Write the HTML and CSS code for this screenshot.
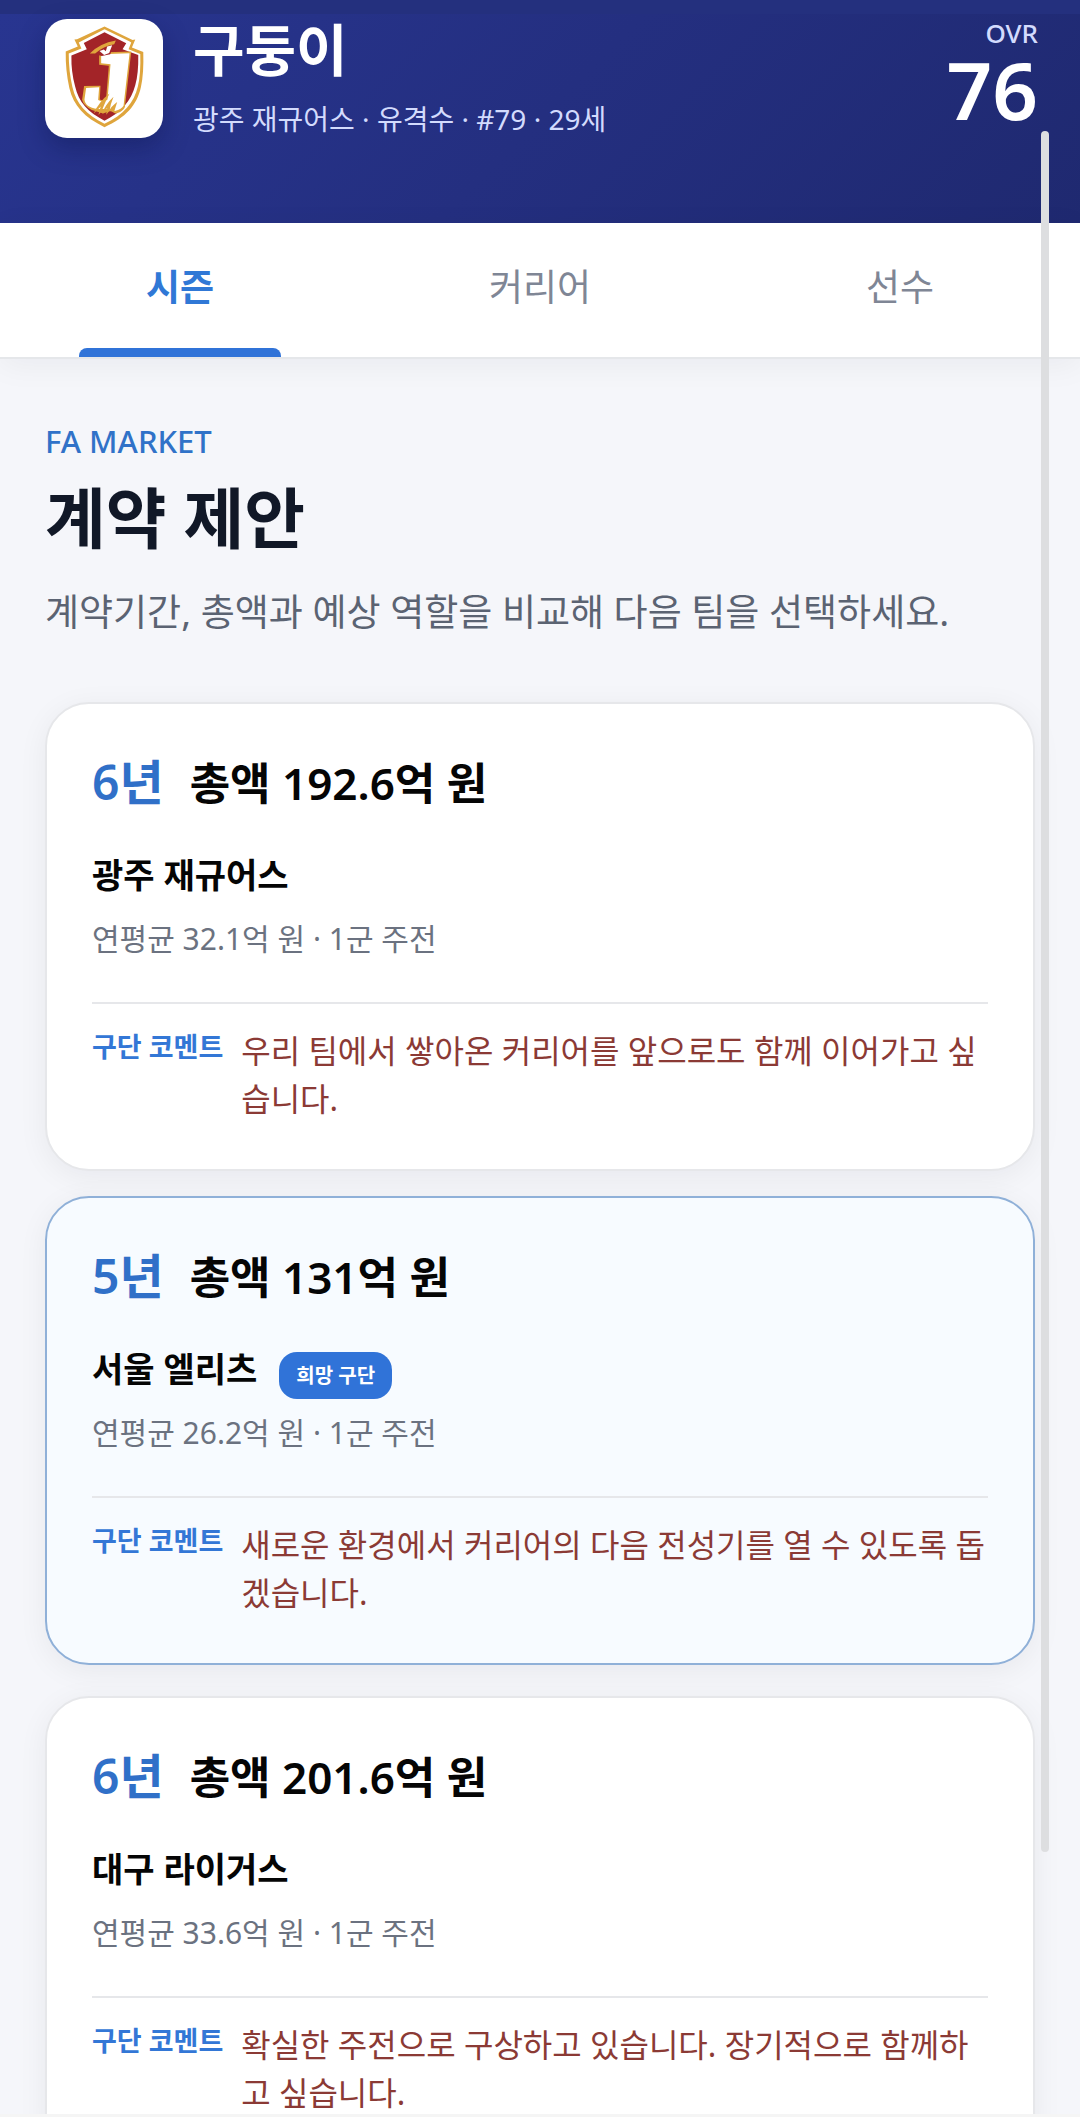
FILE: index.html
```html
<!DOCTYPE html>
<html lang="ko">
<head>
<meta charset="utf-8">
<meta name="viewport" content="width=device-width, initial-scale=1">
<title>계약 제안</title>
<link rel="stylesheet" href="styles.css">
</head>
<body>
<div class="app">
  <header class="player">
    <div class="player-logo">
      <svg viewBox="45 28 353 355" role="img" aria-label="광주 재규어스">
        <path fill="#dfa53c" d="M223 50 307 90 315 89 305 113 339 126Q341 190 332 231C320 286 286 323 223 351C163 323 130 286 118 235Q106 182 107 125L143 110 133 89 141 88Z"/>
        <path fill="#fff" d="M223 58 297 94 303 98 295 118 330 132Q332 190 323 229C311 279 281 314 223 341C168 314 138 281 127 231Q116 185 116 131L154 116 146 98Z"/>
        <path fill="#a32428" d="M223 67 288 100 277 118 324 135Q325 190 315 226C302 273 275 306 223 332C173 306 146 277 135 229Q123 186 124 137L170 118 161 99Z"/>
        <path fill="#dfa53c" d="M207 128 303 125 299 160 284 291C280 302 264 311 255 310L241 302 219 310 185 300Q160 286 156 269L162 228 211 227 209 268Q223 274 228 262L236 167 207 164Z"/>
        <path fill="#fff" d="M213 133 298 130 280 287Q275 297 254 303L229 297 203 297C176 292 165 284 163 268L168 234 207 232 204 270Q221 279 232 268L241 163 213 160Z"/>
        <path fill="#a32428" d="M193 126Q220 107 253 100L240 133 215 138 190 132Z"/>
        <path fill="#fff" d="M208 123 221 119 227 124 231 110 246 106 237 129 222 135Z"/>
        <path fill="#dfa53c" d="M179 131Q209 100 257 92L252 103Q220 108 195 131ZM190 311Q207 273 238 250Q221 284 215 303L205 315Q208 297 212 289ZM215 312Q223 286 250 260Q241 281 238 302L228 314 231 294ZM237 303Q241 291 261 276L252 304Z"/>
      </svg>
    </div>
    <div class="player-info">
      <p class="player-name">구둥이</p>
      <p class="player-meta">광주 재규어스 · 유격수 · #79 · 29세</p>
    </div>
    <div class="rating">
      <span class="rating-label">OVR</span>
      <span class="rating-value">76</span>
    </div>
  </header>

  <nav class="tabs">
    <button class="tab tab-active" type="button" aria-current="page">시즌</button>
    <button class="tab" type="button">커리어</button>
    <button class="tab" type="button">선수</button>
  </nav>

  <main class="content">
    <p class="eyebrow">FA MARKET</p>
    <h1 class="title">계약 제안</h1>
    <p class="lead">계약기간, 총액과 예상 역할을 비교해 다음 팀을 선택하세요.</p>

    <div class="offers">
      <article class="offer">
        <h2 class="deal"><span class="years">6년</span><span>총액 192.6억 원</span></h2>
        <div class="team-row"><h3 class="team">광주 재규어스</h3></div>
        <p class="terms">연평균 32.1억 원 · 1군 주전</p>
        <div class="comment">
          <span class="comment-label">구단 코멘트</span>
          <p class="comment-text">우리 팀에서 쌓아온 커리어를 앞으로도 함께 이어가고 싶습니다.</p>
        </div>
      </article>

      <article class="offer offer-preferred">
        <h2 class="deal"><span class="years">5년</span><span>총액 131억 원</span></h2>
        <div class="team-row"><h3 class="team">서울 엘리츠</h3><span class="badge">희망 구단</span></div>
        <p class="terms">연평균 26.2억 원 · 1군 주전</p>
        <div class="comment">
          <span class="comment-label">구단 코멘트</span>
          <p class="comment-text">새로운 환경에서 커리어의 다음 전성기를 열 수 있도록 돕겠습니다.</p>
        </div>
      </article>

      <article class="offer">
        <h2 class="deal"><span class="years">6년</span><span>총액 201.6억 원</span></h2>
        <div class="team-row"><h3 class="team">대구 라이거스</h3></div>
        <p class="terms">연평균 33.6억 원 · 1군 주전</p>
        <div class="comment">
          <span class="comment-label">구단 코멘트</span>
          <p class="comment-text">확실한 주전으로 구상하고 있습니다. 장기적으로 함께하고 싶습니다.</p>
        </div>
      </article>
    </div>
  </main>
  <div class="scroll-thumb"></div>
</div>
</body>
</html>
```
FILE: styles.css
```css
* {
  box-sizing: border-box;
}

body,
h1,
h2,
h3,
p {
  margin: 0;
}

body {
  font-family: "Noto Sans", "Noto Sans CJK KR", sans-serif;
  background: #f5f6fa;
  color: #050505;
}

.app {
  position: relative;
  display: flex;
  flex-direction: column;
  height: 100vh;
  overflow: hidden;
  border-bottom: 3px solid #f5f5f5;
}

/* Player header */
.player {
  display: flex;
  flex-shrink: 0;
  align-items: flex-start;
  gap: 30px;
  padding: 5px 42px 84px 45px;
  border-top: 14px solid #24307e;
  background: linear-gradient(135deg, #283590, #242f80 50%, #1f2970);
  color: #fff;
}

.player-logo {
  width: 118px;
  height: 119px;
  border-radius: 22px;
  background: #fff;
  box-shadow: 0 10px 26px rgba(10, 18, 70, 0.35);
}

.player-logo svg {
  display: block;
  width: 100%;
  height: 100%;
}

.player-info {
  flex: 1;
}

.player-name {
  font-size: 56px;
  font-weight: 600;
  line-height: 60px;
}

.player-meta {
  margin-top: 20px;
  font-size: 28px;
  line-height: 40px;
  color: #d3dbfd;
}

.rating {
  display: flex;
  flex-direction: column;
  align-items: flex-end;
}

.rating-label {
  font-size: 26px;
  font-weight: 500;
  line-height: 28px;
  color: #d3dbfd;
}

.rating-value {
  font-size: 80px;
  font-weight: 600;
  line-height: 84px;
}

/* Tabs */
.tabs {
  position: relative;
  z-index: 1;
  display: grid;
  flex-shrink: 0;
  grid-template-columns: repeat(3, 1fr);
  background: #fff;
  border-bottom: 2px solid #e5e7ea;
  box-shadow: 0 6px 30px rgba(20, 25, 40, 0.05);
}

.tab {
  position: relative;
  height: 134px;
  padding: 0 0 10px;
  border: 0;
  background: none;
  color: #7f8695;
  font: inherit;
  font-size: 37px;
}

.tab-active {
  color: #3078d6;
  font-weight: 600;
}

.tab-active::after {
  content: "";
  position: absolute;
  right: 22%;
  bottom: 0;
  left: 22%;
  height: 9px;
  border-radius: 8px 8px 0 0;
  background: #3073d8;
}

/* Page content */
.content {
  flex: 1;
  min-height: 0;
  padding: 62px 45px 0;
}

.eyebrow {
  font-size: 31px;
  font-weight: 500;
  line-height: 40px;
  color: #3072c8;
}

.title {
  margin-top: 10px;
  font-size: 66px;
  font-weight: 600;
  line-height: 92px;
  color: #111827;
}

.lead {
  margin-top: 22px;
  font-size: 37px;
  line-height: 54px;
  color: #5b6372;
}

.offers {
  display: flex;
  flex-direction: column;
  gap: 25px;
  margin-top: 63px;
}

.offer {
  padding: 46px 45px;
  border: 2px solid #e6e7ea;
  border-radius: 44px;
  background: #fff;
  box-shadow: 0 6px 30px rgba(20, 25, 40, 0.06);
}

.offer-preferred {
  margin-bottom: 6px;
  border-color: #8fb0d8;
  background: #f7fbff;
}

.deal {
  display: flex;
  align-items: baseline;
  gap: 26px;
  font-size: 44px;
  font-weight: 600;
  line-height: 64px;
}

.years {
  font-size: 48px;
  color: #3070c8;
}

.team-row {
  display: flex;
  gap: 22px;
  height: 54px;
  margin-top: 36px;
}

.team {
  font-size: 34px;
  font-weight: 600;
  line-height: 48px;
}

.badge {
  align-self: flex-end;
  padding: 0 17px;
  border-radius: 18px;
  background: #3073d8;
  color: #fff;
  font-size: 20px;
  font-weight: 600;
  line-height: 47px;
}

.terms {
  margin-top: 12px;
  font-size: 30px;
  line-height: 44px;
  color: #6b7280;
}

.comment {
  display: flex;
  gap: 18px;
  margin-top: 41px;
  padding-top: 23px;
  border-top: 2px solid #e6e7ea;
}

.comment-label {
  flex-shrink: 0;
  font-size: 27px;
  font-weight: 600;
  line-height: 40px;
  color: #3377d6;
}

.comment-text {
  font-size: 32px;
  line-height: 48px;
  color: #8b3a35;
}

/* Scroll position indicator */
.scroll-thumb {
  position: absolute;
  top: 131px;
  right: 31px;
  z-index: 2;
  width: 8px;
  height: 81.3vh;
  border-radius: 4px;
  background: #dddee0;
}
```
